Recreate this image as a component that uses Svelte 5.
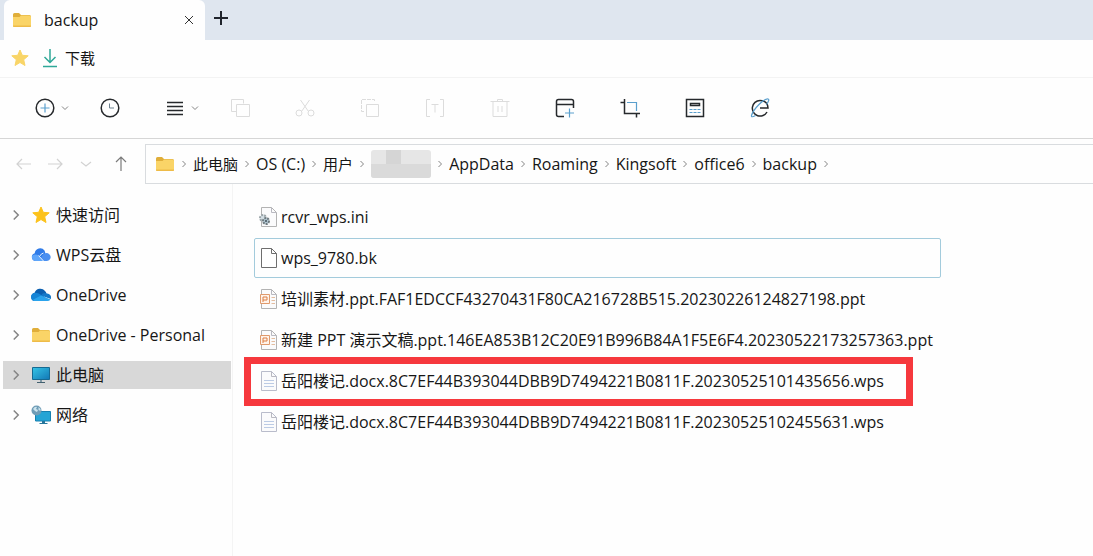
<script lang="ts">
  type Crumb = { name: string; lang?: string; hidden?: boolean }
  type Place = { name: string; icon: string }
  type Entry = { name: string; icon: string }

  let crumbs: Crumb[] = [
    { name: '此电脑', lang: 'zh' },
    { name: 'OS (C:)' },
    { name: '用户', lang: 'zh' },
    { name: '', hidden: true },
    { name: 'AppData' },
    { name: 'Roaming' },
    { name: 'Kingsoft' },
    { name: 'office6' },
    { name: 'backup' }
  ]

  let places: Place[] = [
    { name: '快速访问', icon: 'star' },
    { name: 'WPS云盘', icon: 'wps' },
    { name: 'OneDrive', icon: 'onedrive' },
    { name: 'OneDrive - Personal', icon: 'folder' },
    { name: '此电脑', icon: 'pc' },
    { name: '网络', icon: 'network' }
  ]

  let files: Entry[] = [
    { name: 'rcvr_wps.ini', icon: 'ini' },
    { name: 'wps_9780.bk', icon: 'blank' },
    { name: '培训素材.ppt.FAF1EDCCF43270431F80CA216728B515.20230226124827198.ppt', icon: 'ppt' },
    { name: '新建 PPT 演示文稿.ppt.146EA853B12C20E91B996B84A1F5E6F4.20230522173257363.ppt', icon: 'ppt' },
    { name: '岳阳楼记.docx.8C7EF44B393044DBB9D7494221B0811F.20230525101435656.wps', icon: 'doc' },
    { name: '岳阳楼记.docx.8C7EF44B393044DBB9D7494221B0811F.20230525102455631.wps', icon: 'doc' }
  ]

  let tools = [
    { id: 'new', label: '新建', menu: true },
    { id: 'recent', label: '最近' },
    { id: 'view', label: '查看', menu: true },
    { id: 'copy', label: '复制', disabled: true },
    { id: 'cut', label: '剪切', disabled: true },
    { id: 'paste', label: '粘贴', disabled: true },
    { id: 'rename', label: '重命名', disabled: true },
    { id: 'delete', label: '删除', disabled: true },
    { id: 'window', label: '新建窗口' },
    { id: 'crop', label: '截图' },
    { id: 'calc', label: '计算器' },
    { id: 'browser', label: '浏览器' }
  ]

  let place = $state('此电脑')
  let focused = $state(1)
  let marked = 4
</script>

{#snippet folder()}
  <svg class="icon" viewBox="0 0 20 20" aria-hidden="true">
    <path d="M1 4.500q0-1.500 1.500-1.500h4.500l2 2h8.500q1.500 0 1.500 1.500v3H1z" fill="#e0ae3a" />
    <path d="M1 7h6.500l1.500-1.500h8.500q1.500 0 1.500 1.500v9q0 1-1 1H2q-1 0-1-1z" fill="#fad467" />
    <path d="M1 15.500h18v.5q0 1-1 1H2q-1 0-1-1z" fill="#eebb48" />
  </svg>
{/snippet}

{#snippet star(color: string)}
  <svg class="icon" viewBox="0 0 20 20" aria-hidden="true">
    <path
      d="M10 2l2.300 5.300 5.900.5-4.500 3.900 1.300 5.800L10 14.500l-5 3 1.300-5.800-4.500-3.900 5.900-.5z"
      fill={color}
      stroke={color}
      stroke-linejoin="round"
    />
  </svg>
{/snippet}

{#snippet chevron(direction: string)}
  <svg class="chevron" viewBox="0 0 8 8" aria-hidden="true">
    <path d={direction === 'down' ? 'M1 2.500l3 3 3-3' : 'M2.500 1l3 3-3 3'} />
  </svg>
{/snippet}

{#snippet placeIcon(icon: string)}
  {#if icon === 'star'}
    {@render star('#fcc21b')}
  {:else if icon === 'folder'}
    {@render folder()}
  {:else if icon === 'wps'}
    <svg class="icon" viewBox="0 0 20 20" aria-hidden="true">
      <path d="M4.500 16a4 4 0 0 1-.8-7.800A5.500 5.500 0 0 1 13.500 5.500l1 3-6 7.500z" fill="#2f7be8" />
      <path d="M8 16l3-5a4.500 4.500 0 0 1 7.500-1.500 3.800 3.800 0 0 1-2.500 6.500z" fill="#4a8ff0" />
      <path d="M1 11q4-3 7.500.5l4 4.500H4.500A4 4 0 0 1 1 11z" fill="#5fa6fa" />
      <path d="M7.500 10.500l5 5.500M8.500 11.500q1.500-3 4-3.500" fill="none" stroke="#e6f2ff" />
    </svg>
  {:else if icon === 'onedrive'}
    <svg class="icon" viewBox="0 0 20 20" aria-hidden="true">
      <path d="M4 16a4 4 0 0 1-.5-7.900A6 6 0 0 1 14 6a5 5 0 0 1 1.500 3L8 16z" fill="#0b5fb0" />
      <path d="M5 8a5 5 0 0 1 3.500 1l9 5.500L15 16H4a4 4 0 0 1-4-4 4 4 0 0 1 5-4z" fill="#1584d6" />
      <path d="M10 10.500a5 5 0 0 1 6-2 4 4 0 0 1 3.800 5.500z" fill="#1478c8" />
      <path d="M10 10.500l9.500 4A4 4 0 0 1 16 16H4a4 4 0 0 1-2.500-1z" fill="#2aa3ec" />
    </svg>
  {:else if icon === 'pc'}
    <svg class="icon" viewBox="0 0 20 20" aria-hidden="true">
      <defs>
        <linearGradient id="screen" x2="1" y2="1">
          <stop stop-color="#36c5e6" />
          <stop offset="1" stop-color="#1277b5" />
        </linearGradient>
      </defs>
      <path d="M1.500 2.500h17v12h-17z" fill="url(#screen)" stroke="#166a92" />
      <path d="M9 15h2v2H9z" fill="#7f98a5" />
      <path d="M6 17.500h8" stroke="#43606f" />
    </svg>
  {:else}
    <svg class="icon" viewBox="0 0 20 20" aria-hidden="true">
      <path d="M4.500 6.500h15v9.500h-15z" fill="#25a4d5" stroke="#1680b0" />
      <path d="M11 16h3v2h-3zM8.500 18h8v1h-8z" fill="#26759b" />
      <circle cx="5.500" cy="5.500" r="5" fill="#6f9cb6" />
      <path d="M2 4q2-3 4-2l-1 2 2 1-1 2-2-1zM7.500 2l2 2v2l-2-1z" fill="#cce4ee" />
    </svg>
  {/if}
{/snippet}

{#snippet fileIcon(icon: string)}
  <svg class="icon" viewBox="0 0 20 20" aria-hidden="true">
    <path
      d="M2.500.5h10l5 5v14h-15z"
      fill={icon === 'blank' ? '#fff' : '#fbfbfc'}
      stroke={icon === 'blank' ? '#6e6e6e' : icon === 'doc' ? '#b9bccb' : '#b3b3b3'}
    />
    <path
      d="M12.500.5v5h5"
      fill="none"
      stroke={icon === 'blank' ? '#6e6e6e' : '#b9b9c1'}
    />
    {#if icon === 'doc'}
      <path d="M5 9.500h10M5 12.500h10M5 15.500h10" stroke="#bccbe5" />
    {:else if icon === 'ppt'}
      <path d="M1.500 5.500h9v9h-9z" fill="#fff3ea" stroke="#e09a6c" />
      <path d="M4 13V8h4v3H4" fill="none" stroke="#dc7e45" />
      <path d="M12.500 8.500H16M12.500 11.500H16M12.500 14.500H16" stroke="#e3bda0" />
    {:else if icon === 'ini'}
      <circle cx="4" cy="11" r="3" fill="#d5e0e6" stroke="#9aa4a8" stroke-width="2" stroke-dasharray="2 1" />
      <circle cx="7" cy="14" r="3" fill="#b2c7d3" stroke="#6f7a7f" stroke-width="2" stroke-dasharray="2 1" />
      <circle cx="7" cy="14" r="1" fill="#41515a" />
    {/if}
  </svg>
{/snippet}

{#snippet toolIcon(id: string)}
  <svg class="icon line" viewBox="0 0 20 20" aria-hidden="true">
    {#if id === 'new'}
      <circle cx="10" cy="10" r="8.800" />
      <path class="accent" d="M10 5.500v9M5.500 10h9" />
    {:else if id === 'recent'}
      <circle cx="10" cy="10" r="8.800" />
      <path class="hands" d="M9.500 5.500V10h4.500" />
    {:else if id === 'view'}
      <path d="M2 4.500h16M2 8.500h16M2 12.500h16M2 16.500h16" />
    {:else if id === 'copy'}
      <path d="M6.500 13.500h-5v-12h12v4M6.500 6.500h13v12h-13z" />
    {:else if id === 'cut'}
      <path d="M5.500 2l8 11.500M14.500 2l-8 11.500" />
      <circle cx="4" cy="15" r="3" />
      <circle cx="16" cy="15" r="3" />
    {:else if id === 'paste'}
      <path d="M6.500 6.500h12v12h-12z" />
      <path d="M4 13.500H1.500v-12h13V4" stroke-dasharray="4 1" />
    {:else if id === 'rename'}
      <path d="M5 1.500H1.500v17H5M15 1.500h3.500v17H15M6.500 6.500h7M10 6.500v8" />
    {:else if id === 'delete'}
      <path d="M.5 3.500h19M7.500 3V1.500h5V3M3 4v14.500h14V4M8 8v6M12 8v6" />
    {:else if id === 'window'}
      <path d="M9 18.500H3.500q-2 0-2-2v-13q0-2 2-2h13q2 0 2 2V10M1.500 6.500h17" />
      <path class="accent" d="M14.500 10.500v9M10 15h9" />
    {:else if id === 'crop'}
      <path d="M.5 4.500h4M4.500 1v14.500h15.500M16.500 15.500v4" />
      <path class="accent" d="M7 4.500h9.500V13" />
    {:else if id === 'calc'}
      <path d="M1.500 1.500h17v17h-17zM5.500 5.500h9v2h-9z" />
      <path class="accent" d="M4.500 11.500h11M4.500 14.500h11" stroke-dasharray="3 1" />
    {:else}
      <path d="M10 10h8q-.3-7.500-8-7.500a7.800 7.800 0 1 0 7 11.500" />
      <path
        class="accent"
        d="M16.500 6.500q3.500-5 1.500-5.500-3-.5-9 5.500t-7.500 11q-.5 2.500 4 0"
      />
    {/if}
  </svg>
{/snippet}

<div class="explorer">
  <header class="tabs">
    <div class="tab">
      {@render folder()}
      <span class="title">backup</span>
      <button class="close" aria-label="关闭标签页">
        <svg viewBox="0 0 10 10" aria-hidden="true"><path d="M1 1l8 8M9 1l-8 8" /></svg>
      </button>
    </div>
    <button class="add" aria-label="新建标签页">
      <svg viewBox="0 0 16 16" aria-hidden="true"><path d="M8 1v14M1 8h14" /></svg>
    </button>
  </header>

  <nav class="bookmarks" aria-label="收藏">
    {@render star('#f9d567')}
    <a href="#downloads">
      <svg class="icon download" viewBox="0 0 20 20" aria-hidden="true">
        <path d="M10 1v13M4.500 9l5.500 5.500L15.500 9M3 18.500h14" />
      </svg>
      下载
    </a>
  </nav>

  <div class="toolbar" role="toolbar" aria-label="工具栏">
    {#each tools as tool}
      <button class="tool" disabled={tool.disabled} aria-label={tool.label}>
        {@render toolIcon(tool.id)}
        {#if tool.menu}
          {@render chevron('down')}
        {/if}
      </button>
    {/each}
  </div>

  <div class="location">
    <div class="history">
      <button disabled aria-label="后退">
        <svg viewBox="0 0 16 16" aria-hidden="true"><path d="M15 8H1M6 3L1 8l5 5" /></svg>
      </button>
      <button disabled aria-label="前进">
        <svg viewBox="0 0 16 16" aria-hidden="true"><path d="M1 8h14M10 3l5 5-5 5" /></svg>
      </button>
      <button disabled aria-label="历史记录">
        <svg viewBox="0 0 16 16" aria-hidden="true"><path d="M3 6l5 4 5-4" /></svg>
      </button>
      <button class="up" aria-label="上移">
        <svg viewBox="0 0 16 16" aria-hidden="true"><path d="M8 15V1M3 6l5-5 5 5" /></svg>
      </button>
    </div>
    <nav class="address" aria-label="路径">
      {@render folder()}
      {@render chevron('right')}
      {#each crumbs as crumb}
        {#if crumb.hidden}
          <span class="mosaic">
            {#each { length: 8 } as _}
              <i></i>
            {/each}
          </span>
        {:else}
          <a href="#{crumb.name}" lang={crumb.lang}>{crumb.name}</a>
        {/if}
        {@render chevron('right')}
      {/each}
    </nav>
  </div>

  <div class="content">
    <aside>
      {#each places as item}
        <button
          class="place"
          class:active={place === item.name}
          onclick={() => {
            place = item.name
          }}
        >
          {@render chevron('right')}
          {@render placeIcon(item.icon)}
          <span>{item.name}</span>
        </button>
      {/each}
    </aside>
    <main>
      {#each files as file, index}
        <button
          class="file"
          class:focused={focused === index}
          class:marked={marked === index}
          onclick={() => {
            focused = index
          }}
        >
          {@render fileIcon(file.icon)}
          <span>{file.name}</span>
        </button>
      {/each}
    </main>
  </div>
</div>

<style>
  :global(body) {
    margin: 0;
    background: #fefefe;
  }

  .explorer {
    display: flex;
    flex-direction: column;
    min-height: 100vh;
    font: 16px/24px 'Open Sans', 'Noto Sans CJK SC', sans-serif;
    color: #161616;
  }

  button {
    padding: 0;
    font: inherit;
    color: inherit;
    text-align: start;
    background: none;
    border: 0;
  }

  a {
    color: inherit;
    text-decoration: none;
  }

  svg {
    flex-shrink: 0;
    fill: none;
  }

  .icon {
    width: 20px;
    height: 20px;
  }

  .chevron {
    width: 8px;
    height: 8px;
    stroke: #858585;
  }

  .tabs {
    display: flex;
    height: 40px;
    padding-left: 4px;
    background: #dfe6ef;
  }

  .tab {
    display: flex;
    align-items: center;
    width: 201px;
    box-sizing: border-box;
    padding: 0 11px 0 8px;
    background: #fefefe;
    border-radius: 6px 6px 0 0;
  }

  .title {
    flex: 1;
    margin-left: 12px;
  }

  .close,
  .add {
    display: grid;
    place-items: center;
  }

  .close svg {
    width: 10px;
    height: 10px;
    stroke: #333;
  }

  .add {
    width: 32px;
    height: 36px;
  }

  .add svg {
    width: 16px;
    height: 16px;
    stroke: #20242c;
    stroke-width: 2;
  }

  .bookmarks {
    display: flex;
    gap: 10px;
    align-items: center;
    height: 36px;
    padding: 0 10px 1px;
    font-size: 15px;
    border-bottom: 1px solid #f3f3f3;
  }

  .bookmarks a {
    display: flex;
    gap: 5px;
    align-items: center;
  }

  .download {
    stroke: #2fa898;
    stroke-width: 1.5;
  }

  .toolbar {
    display: flex;
    height: 60px;
    padding-left: 13px;
    border-bottom: 1px solid #d6d6d6;
  }

  .tool {
    display: flex;
    gap: 6px;
    align-items: center;
    width: 65px;
    padding-left: 22px;
  }

  .line {
    stroke: #26292c;
    stroke-width: 1.5;
  }

  .line .accent {
    stroke: #5a9fcd;
    stroke-width: 1.2;
  }

  .line .hands {
    stroke: #6d8290;
    stroke-width: 1;
  }

  .tool:disabled .line {
    stroke: #dcdcdc;
    stroke-width: 1;
  }

  .location {
    display: flex;
    padding-top: 5px;
  }

  .history {
    display: flex;
    gap: 15px;
    align-items: center;
    box-sizing: border-box;
    width: 145px;
    padding-left: 16px;
  }

  .history button {
    display: grid;
    place-items: center;
    width: 16px;
    height: 24px;
  }

  .history .up {
    margin-left: 4px;
  }

  .history svg {
    width: 16px;
    height: 16px;
    stroke: #7b7b7b;
    stroke-width: 1.2;
  }

  .history button:disabled svg {
    stroke: #d2d2d2;
  }

  .address {
    display: flex;
    flex: 1;
    gap: 5px;
    align-items: center;
    height: 38px;
    padding-left: 9px;
    border: 1px solid #d9dcdf;
    border-right: 0;
  }

  .address a:lang(zh) {
    font-size: 15px;
  }

  .mosaic {
    display: grid;
    grid-template-columns: repeat(4, 15px);
    grid-template-rows: 14px 14px;
    overflow: hidden;
    background: #e6e6e6;
    border-radius: 3px;
  }

  .mosaic i:nth-child(2) {
    background: #d5d5d5;
  }

  .mosaic i:nth-child(n + 5) {
    background: #dadada;
  }

  .content {
    display: flex;
    flex: 1;
  }

  aside {
    display: flex;
    flex-direction: column;
    gap: 12px;
    box-sizing: border-box;
    width: 233px;
    padding: 17px 1px 0 3px;
    border-right: 1px solid #f4f4f4;
  }

  .place {
    display: flex;
    align-items: center;
    height: 28px;
    padding-left: 7px;
  }

  .place .chevron {
    width: 12px;
    height: 12px;
    margin-right: 9px;
  }

  .place .icon {
    margin-right: 5px;
  }

  .place.active {
    background: #d8d8d8;
  }

  main {
    display: flex;
    flex: 1;
    flex-direction: column;
    gap: 1px;
    align-items: start;
    padding: 13px 20px 0 21px;
  }

  .file {
    position: relative;
    display: flex;
    gap: 2px;
    align-items: center;
    box-sizing: border-box;
    width: 687px;
    max-width: 100%;
    height: 40px;
    padding-left: 4px;
    white-space: nowrap;
    border: 1px solid transparent;
    border-radius: 2px;
  }

  .file.focused {
    border-color: #a3cbdc;
  }

  .file.marked::after {
    position: absolute;
    inset: -5px 27px -6px -11px;
    content: '';
    border: 7px solid #f6383d;
  }
</style>
